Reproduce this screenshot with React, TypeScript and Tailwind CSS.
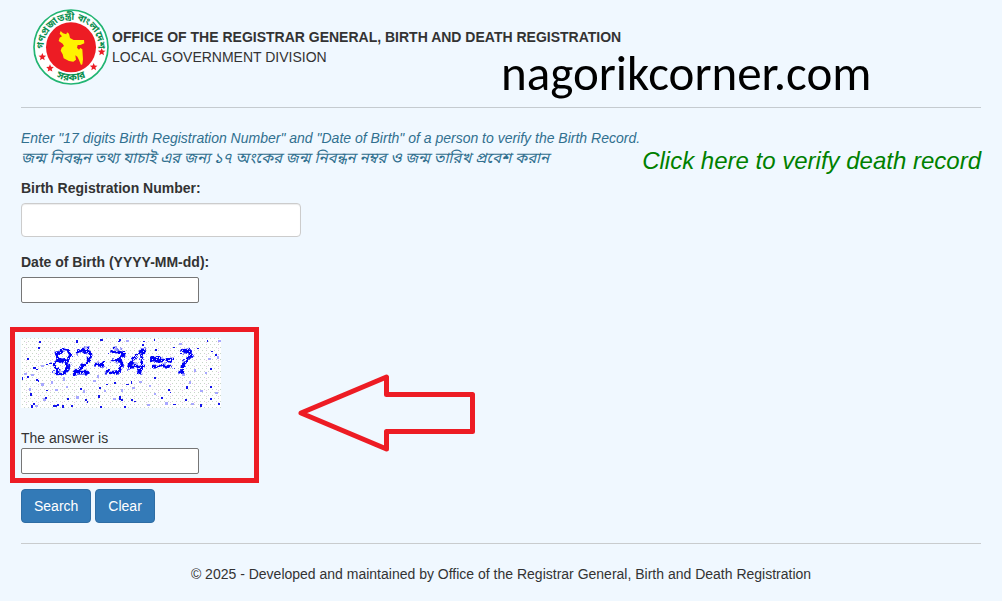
import React from 'react';

const star = (cx: number, cy: number, r: number) =>
  Array.from({ length: 10 }, (_, i) => {
    const a = -Math.PI / 2 + (i * Math.PI) / 5;
    const k = i % 2 ? r * 0.45 : r;
    return `${(cx + k * Math.cos(a)).toFixed(1)},${(cy + k * Math.sin(a)).toFixed(1)}`;
  }).join(' ');

function Emblem() {
  return (
    <svg viewBox="0 0 246 246" className="size-[82px] shrink-0" role="img" aria-label="Government emblem">
      <defs>
        <path id="arc-top" d="M41 126 A82 82 0 0 1 205 126" />
        <path id="arc-bottom" d="M21 125 A102 102 0 0 0 225 125" />
      </defs>
      <circle cx="123" cy="126" r="111" fill="#fff" stroke="#22b573" strokeWidth="5" />
      <circle cx="123" cy="127" r="75" fill="#ed1c24" />
      <path
        d="M92 78 L99 85 L109 88 L111 82 L117 86 L120 99 L131 105 L162 105 L163 115 L151 120 L143 120 L141 128 L147 134 L151 129 L157 133 L159 163 L157 178 L153 180 L147 165 L142 155 L136 151 L138 164 L130 170 L117 168 L101 160 L98 148 L92 137 L95 128 L102 123 L98 116 L86 108 L89 98 L96 94 L89 86 Z"
        fill="#fff200"
      />
      <g fill="#ed1c24">
        <polygon points={star(37, 156, 12)} />
        <polygon points={star(60, 190, 12)} />
        <polygon points={star(191, 186, 12)} />
        <polygon points={star(215, 141, 12)} />
      </g>
      <g className="font-['Noto_Sans_Bengali','Lohit_Bengali',sans-serif] font-bold" fill="#0b8f50" textAnchor="middle">
        <text fontSize="29">
          <textPath href="#arc-top" startOffset="50%">গণপ্রজাতন্ত্রী বাংলাদেশ</textPath>
        </text>
        <text fontSize="31">
          <textPath href="#arc-bottom" startOffset="50%">সরকার</textPath>
        </text>
      </g>
    </svg>
  );
}

const strong: number[][] = [
  [18, 3, 2, 2], [79, 1, 3, 2], [98, 1, 2, 2], [97, 3, 2, 1], [17, 9, 2, 2], [6, 20, 2, 2], [12, 29, 3, 2], [15, 31, 2, 1],
  [6, 38, 2, 2], [1, 39, 1, 3], [15, 41, 2, 2], [17, 42, 1, 2], [25, 26, 2, 1], [28, 25, 3, 1], [39, 13, 3, 1], [55, 2, 2, 3],
  [9, 55, 2, 3], [25, 52, 2, 1], [24, 59, 2, 2], [12, 65, 2, 2], [10, 67, 2, 3], [32, 67, 4, 2], [36, 66, 2, 2], [41, 67, 2, 3],
  [46, 60, 2, 2], [50, 67, 2, 2], [64, 61, 2, 2], [66, 63, 1, 2], [59, 50, 2, 2], [78, 49, 2, 2], [77, 57, 2, 3], [79, 68, 2, 2],
  [85, 46, 2, 1], [93, 44, 2, 2], [98, 58, 2, 4], [100, 61, 2, 2], [103, 68, 2, 2], [105, 46, 3, 1], [122, 3, 2, 1], [121, 6, 2, 2],
  [134, 11, 2, 2], [133, 1, 1, 2], [152, 9, 2, 1], [176, 10, 2, 1], [190, 13, 2, 1], [186, 2, 1, 2], [194, 16, 2, 2], [189, 30, 2, 2],
  [189, 48, 2, 2], [165, 48, 2, 3], [147, 51, 2, 2], [149, 54, 1, 1], [140, 59, 2, 2], [133, 39, 2, 2], [152, 66, 3, 1], [164, 61, 2, 2],
  [179, 66, 2, 3], [189, 60, 2, 2], [197, 65, 2, 2], [110, 61, 2, 2], [113, 63, 2, 1], [162, 28, 2, 1], [159, 15, 2, 1], [110, 43, 1, 3],
];
const faint: number[][] = [
  [3, 35, 3, 2], [10, 36, 3, 2], [20, 27, 3, 2], [20, 45, 3, 3], [8, 50, 2, 3], [22, 60, 3, 3], [14, 67, 3, 2], [34, 51, 3, 2],
  [30, 43, 2, 3], [42, 39, 2, 4], [45, 48, 2, 2], [55, 58, 3, 3], [62, 52, 2, 3], [72, 42, 3, 2], [76, 37, 2, 3], [83, 52, 2, 2],
  [92, 60, 3, 2], [100, 51, 2, 3], [111, 49, 3, 2], [118, 43, 3, 2], [128, 47, 2, 2], [120, 11, 3, 3], [143, 24, 2, 3], [158, 5, 3, 2],
  [161, 35, 3, 3], [173, 31, 2, 3], [184, 34, 2, 2], [187, 20, 3, 2], [196, 18, 2, 3], [168, 43, 2, 3], [179, 52, 3, 2], [194, 54, 3, 2],
  [144, 64, 3, 3], [126, 66, 3, 2], [133, 55, 2, 2], [170, 65, 3, 2], [197, 2, 3, 2], [105, 2, 3, 2], [67, 8, 2, 2], [29, 24, 2, 2],
];

function Captcha() {
  return (
    <svg viewBox="0 0 200 70" className="block h-[70px] w-[200px]" shapeRendering="crispEdges" role="img" aria-label="Arithmetic question">
      <defs>
        <pattern id="dither" width="12" height="6" patternUnits="userSpaceOnUse">
          <path d="M1 0h1v1h-1zM5 0h1v1h-1zM9 0h1v1h-1zM3 3h1v1h-1zM7 3h1v1h-1zM11 3h1v1h-1z" fill="#c8d6c8" />
          <path d="M5 4h1v1h-1z" fill="#e4c8e8" />
        </pattern>
        <pattern id="ink" width="4" height="4" patternUnits="userSpaceOnUse">
          <path d="M0 0h4v4h-4z" fill="#0000f5" />
          <path d="M1 1h1v1h-1zM3 3h1v1h-1z" fill="#e6e6ff" />
        </pattern>
        <filter id="rough" x="-5%" y="-10%" width="110%" height="120%">
          <feTurbulence type="fractalNoise" baseFrequency="0.18" numOctaves="2" seed="4" result="noise" />
          <feDisplacementMap in="SourceGraphic" in2="noise" scale="8" xChannelSelector="R" yChannelSelector="G" />
        </filter>
      </defs>
      <rect width="200" height="70" fill="#fff" />
      <rect width="200" height="70" fill="url(#dither)" />
      <g fill="#a8a8ff">
        {faint.map(([x, y, w, h], i) => <rect key={i} x={x} y={y} width={w} height={h} />)}
      </g>
      <g fill="#1414ed">
        {strong.map(([x, y, w, h], i) => <rect key={i} x={x} y={y} width={w} height={h} />)}
      </g>
      <text x="31" y="36" fontSize="33" className="font-['DejaVu_Sans'] italic" fill="url(#ink)" stroke="url(#ink)" strokeWidth="1" filter="url(#rough)">
        82-34=?
      </text>
    </svg>
  );
}

const smallInput = 'block h-[26px] w-[178px] rounded-xs border border-[#767676] bg-white px-1 outline-none';
const button = 'h-[34px] rounded border border-[#2e6da4] bg-[#337ab7] px-3 text-white';

export default function App() {
  return (
    <div className="min-h-screen bg-[#f0f8ff] px-[21px] pb-4 font-['Liberation_Sans',Arial,sans-serif] text-sm leading-5 text-[#333]">
      <header className="relative flex h-[108px] items-start border-b border-[#c5cbd0] pt-[5px] pl-[9px]">
        <Emblem />
        <div className="pt-[22px]">
          <h1 className="font-bold">OFFICE OF THE REGISTRAR GENERAL, BIRTH AND DEATH REGISTRATION</h1>
          <p>LOCAL GOVERNMENT DIVISION</p>
        </div>
        <span className="absolute top-[46px] left-[480px] font-['Carlito','Lato',sans-serif] text-[49px] leading-[54px] whitespace-nowrap text-black">
          nagorikcorner.com
        </span>
      </header>

      <main className="relative border-b border-[#c9ccce] pt-5 pb-5">
        <div className="flex items-start justify-between">
          <p className="text-[#31708f] italic">
            Enter "17 digits Birth Registration Number" and "Date of Birth" of a person to verify the Birth Record.
            <br />
            <span className="font-['Noto_Sans_Bengali','Lohit_Bengali',sans-serif] text-[15px]">
              জন্ম নিবন্ধন তথ্য যাচাই এর জন্য ১৭ অংকের জন্ম নিবন্ধন নম্বর ও জন্ম তারিখ প্রবেশ করান
            </span>
          </p>
          <a href="#death" className="pt-[19px] text-2xl leading-7 whitespace-nowrap text-[#008000] italic">
            Click here to verify death record
          </a>
        </div>

        <form onSubmit={(e) => e.preventDefault()}>
          <div className="mt-[3px]">
            <label htmlFor="brn" className="mb-[5px] block font-bold">Birth Registration Number:</label>
            <input id="brn" type="text" className="block h-[34px] w-[280px] rounded border border-[#ccc] bg-white px-3 shadow-[inset_0_1px_1px_rgba(0,0,0,0.075)] outline-none" />
          </div>
          <div className="mt-[15px]">
            <label htmlFor="dob" className="mb-[5px] block font-bold">Date of Birth (YYYY-MM-dd):</label>
            <input id="dob" type="text" className={smallInput} />
          </div>
          <div className="relative mt-[35px]">
            <Captcha />
            <label htmlFor="answer" className="mt-5 block">The answer is</label>
            <input id="answer" type="text" className={smallInput} />
            <div className="pointer-events-none absolute -top-[11px] -left-[11px] h-[156px] w-[249px] border-5 border-[#ed1c24]" />
            <svg viewBox="0 0 178 78" className="pointer-events-none absolute top-[36px] left-[277px] h-[78px] w-[178px]" aria-hidden="true">
              <path d="M3 39 L88.500 3 V20.500 H174.500 V57.500 H88.500 V75 Z" fill="none" stroke="#ed1c24" strokeWidth="5" strokeLinejoin="round" />
            </svg>
          </div>
          <div className="mt-[15px] flex gap-1">
            <button type="submit" className={button}>Search</button>
            <button type="reset" className={button}>Clear</button>
          </div>
        </form>
      </main>

      <footer className="pt-5 text-center">
        © 2025 - Developed and maintained by Office of the Registrar General, Birth and Death Registration
      </footer>
    </div>
  );
}
